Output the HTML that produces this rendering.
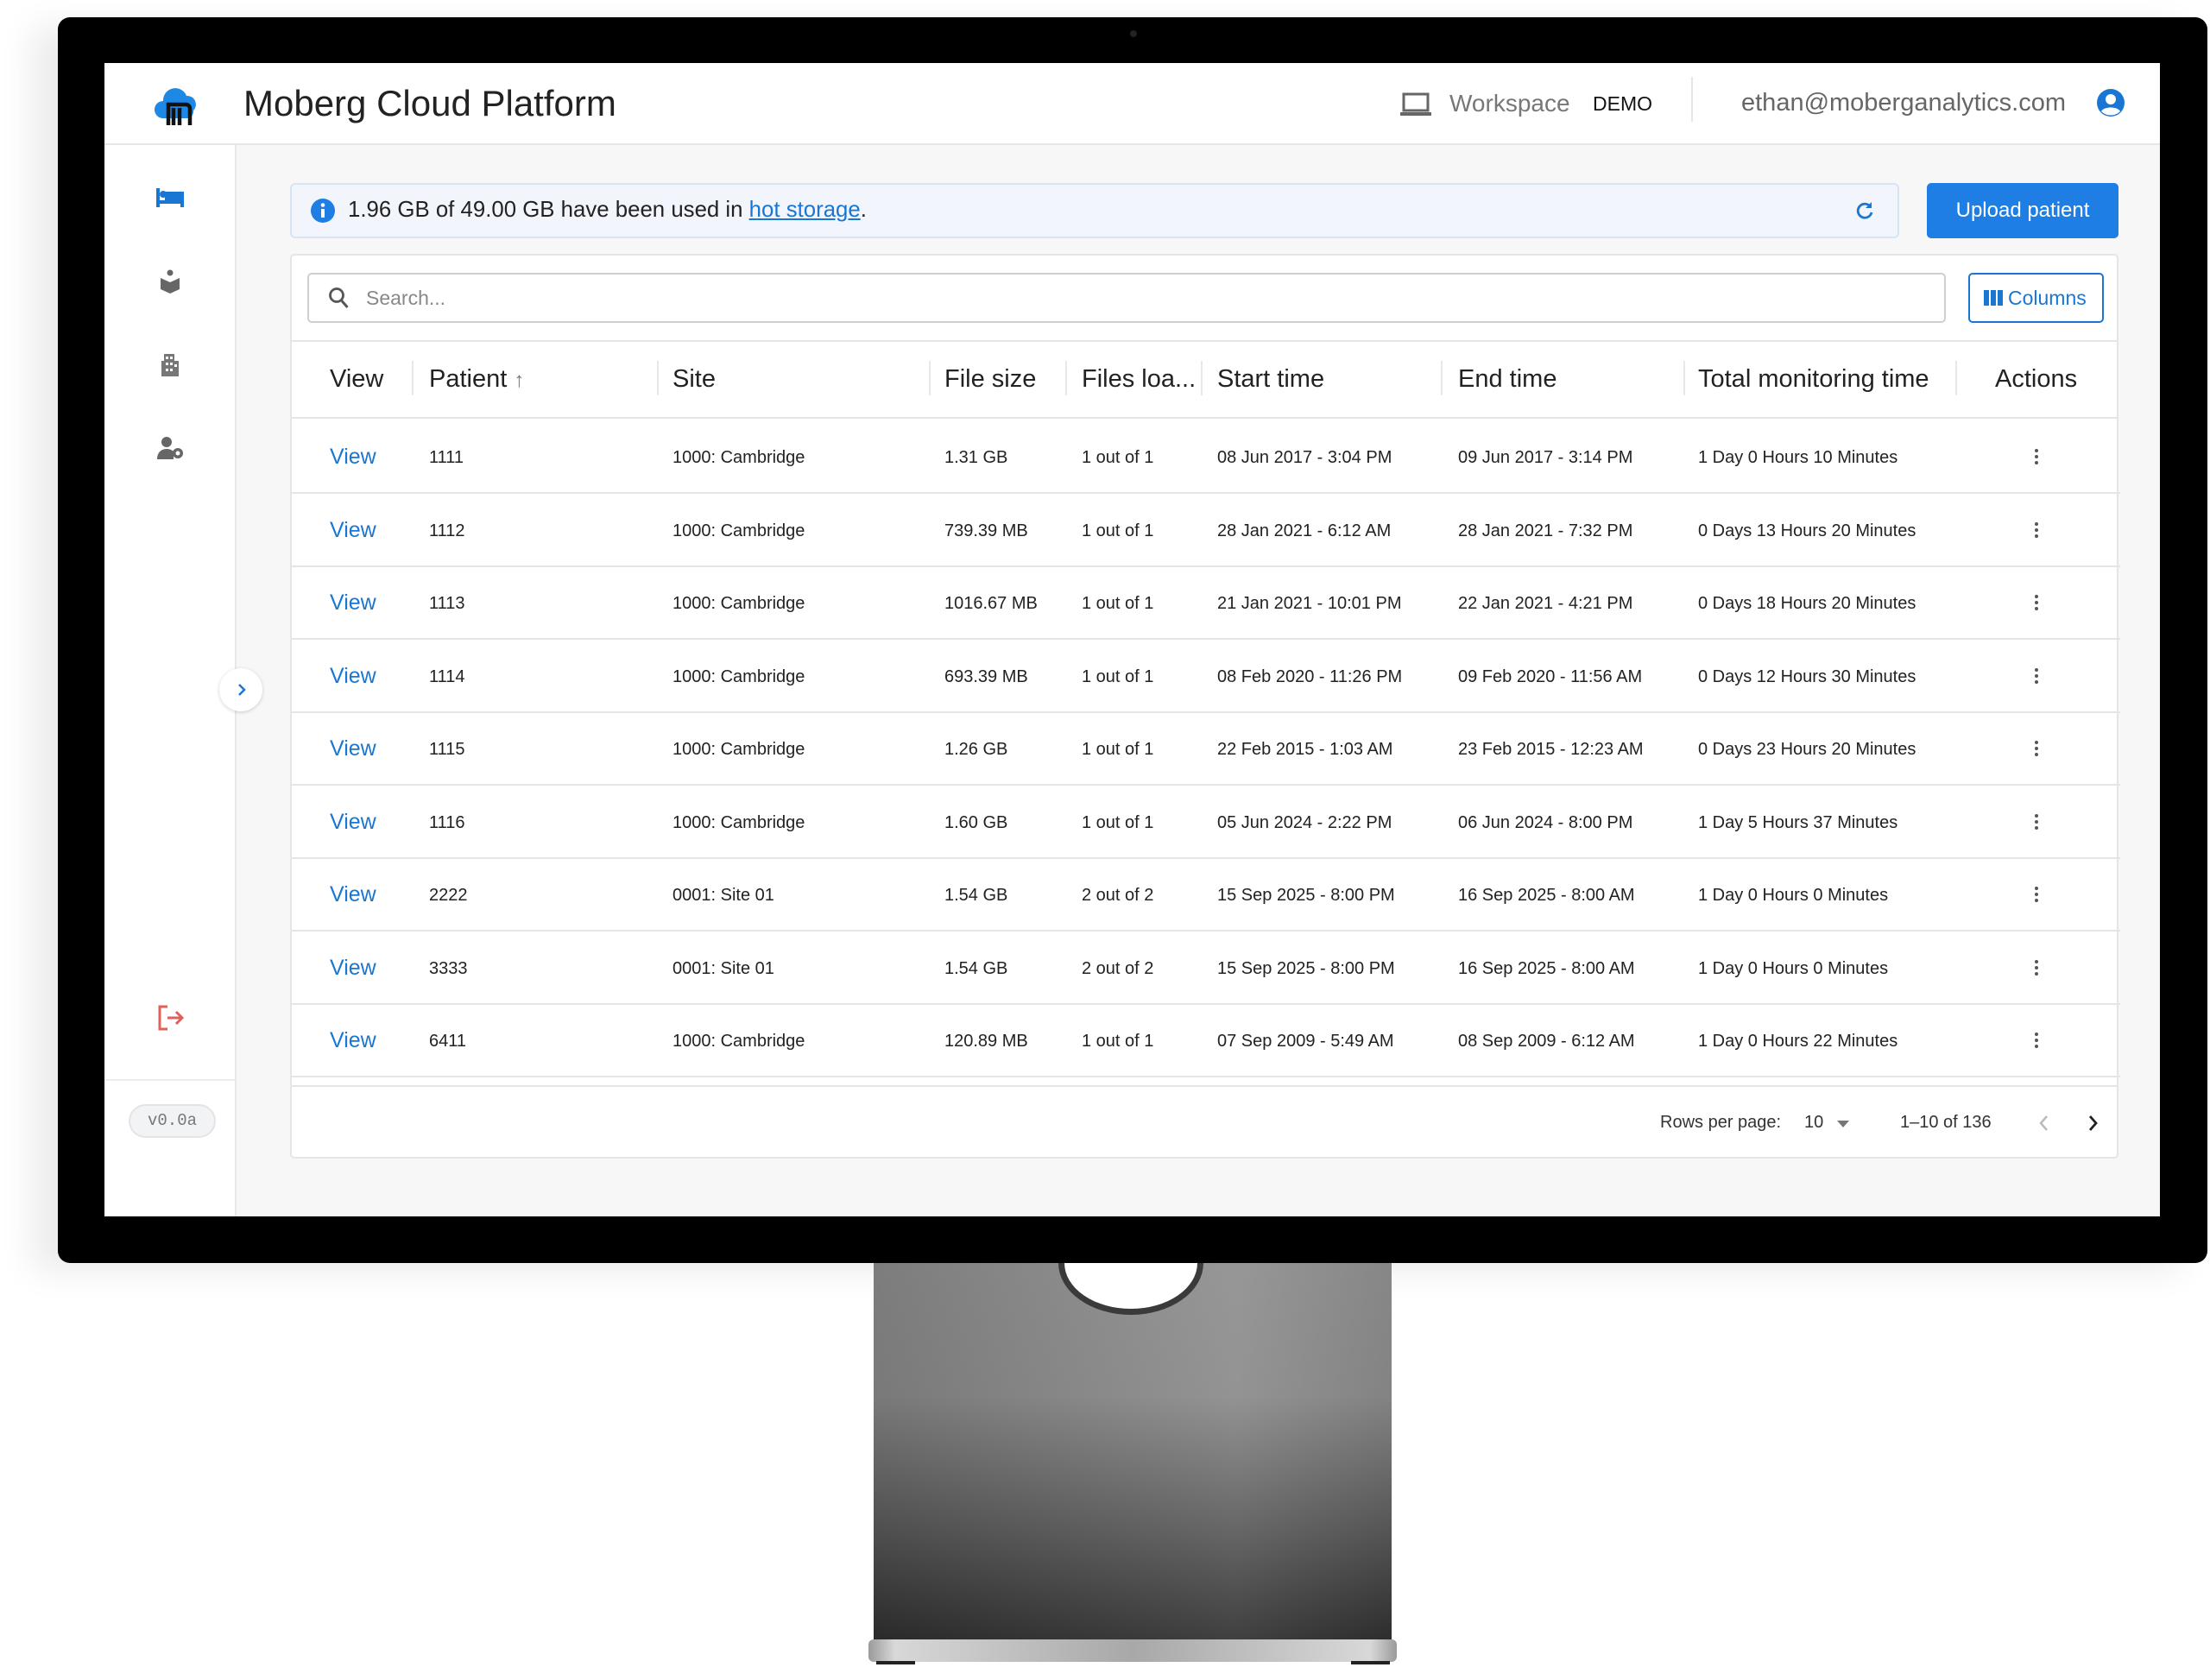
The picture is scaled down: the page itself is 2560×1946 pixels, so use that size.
<!DOCTYPE html>
<html><head><meta charset="utf-8"><style>
*{margin:0;padding:0;box-sizing:border-box}
body{width:2560px;height:1946px;background:#fff;position:relative;overflow:hidden;font-family:"Liberation Sans",sans-serif;color:#222}
.a{position:absolute}
.bezel{left:67px;top:20px;width:2490px;height:1443px;background:#000;border-radius:14px;box-shadow:-30px 10px 40px rgba(0,0,0,.08)}
.screen{left:121px;top:73px;width:2381px;height:1336px;background:#f7f7f7;overflow:hidden}
.hdr{left:0;top:0;width:2381px;height:95px;background:#fff;border-bottom:2px solid #e6e6e6}
.side{left:0;top:95px;width:153px;height:1241px;background:#fff;border-right:2px solid #e8e8e8}
.t{position:absolute;white-space:nowrap}
.hc{font-size:29px;color:#222;top:42px;line-height:30px}
.rc{font-size:20px;color:#222;line-height:24px}
.vw{font-size:25px;color:#1976d2;line-height:28px}
.sep{position:absolute;top:22px;width:2px;height:40px;background:#e8e8e8}
.row{position:absolute;left:0;width:2118px;height:85px;border-bottom:2px solid #e5e5e5}
.kb{position:absolute;left:2019px;width:4px;height:4px;border-radius:2px;background:#555}
</style></head><body>
<div class="a bezel"></div>
<div class="a" style="left:1309px;top:35px;width:8px;height:8px;border-radius:4px;background:#222"></div>
<!-- stand -->
<div class="a" style="left:1012px;top:1463px;width:600px;height:440px;background:linear-gradient(180deg,#8e8e8e 0%,#8a8a8a 35%,#5a5a5a 70%,#2e2e2e 100%)"></div>
<div class="a" style="left:1012px;top:1463px;width:600px;height:440px;background:linear-gradient(90deg,rgba(0,0,0,.12),rgba(255,255,255,.08) 70%,rgba(0,0,0,.05))"></div>
<div class="a" style="left:1226px;top:1463px;width:168px;height:60px;border-radius:0 0 84px 84px/0 0 60px 60px;background:#fff;border:7px solid #3a3a3a;border-top:none"></div>
<div class="a" style="left:1006px;top:1899px;width:612px;height:26px;border-radius:6px;background:linear-gradient(90deg,#9a9a9a,#d8d8d8 5%,#a8a8a8 50%,#d8d8d8 95%,#9a9a9a)"></div>
<div class="a" style="left:1015px;top:1924px;width:45px;height:4px;background:#222"></div>
<div class="a" style="left:1565px;top:1924px;width:45px;height:4px;background:#222"></div>

<div class="a screen">
 <div class="a hdr">
  <svg class="a" style="left:58px;top:24px" width="54" height="48" viewBox="0 0 54 48"><path d="M10 40a10 10 0 0 1 0-20 14 14 0 0 1 27-6 10 10 0 0 1 8 17 9 9 0 0 1-5 9z" fill="#1e88e5"/><path d="M16 48V24h20c3 0 5 2 5 5v19M22 48V28M29 48V28" stroke="#111" stroke-width="4.5" fill="none"/></svg>
  <div class="t" style="left:161px;top:23px;font-size:42px;color:#222">Moberg Cloud Platform</div>
  <svg class="a" style="left:1500px;top:33px" width="38" height="30" viewBox="0 0 38 30"><rect x="5" y="3" width="28" height="19" fill="none" stroke="#666" stroke-width="3"/><rect x="1" y="24" width="36" height="4" fill="#666"/></svg>
  <div class="t" style="left:1558px;top:31px;font-size:28px;color:#777">Workspace</div>
  <div class="t" style="left:1724px;top:34px;font-size:23px;color:#111">DEMO</div>
  <div class="a" style="left:1838px;top:16px;width:2px;height:52px;background:#e6e6e6"></div>
  <div class="t" style="left:1896px;top:30px;font-size:29px;color:#666">ethan@moberganalytics.com</div>
  <svg class="a" style="left:2307px;top:29px" width="34" height="34" viewBox="0 0 34 34"><circle cx="17" cy="17" r="16" fill="#1976d2"/><circle cx="17" cy="13" r="6" fill="#fff"/><path d="M6 27c3-6 19-6 22 0-6 6-16 6-22 0z" fill="#fff"/></svg>
 </div>
 <div class="a side">
  <svg class="a" style="left:60px;top:48px" width="32" height="26" viewBox="0 0 32 26"><path d="M2 2v22M2 18h28v6M10 8h20v10" stroke="#1976d2" stroke-width="4" fill="none"/><circle cx="8" cy="9" r="4" fill="#1976d2"/><rect x="10" y="8" width="20" height="10" fill="#1976d2"/></svg>
  <svg class="a" style="left:63px;top:144px" width="26" height="28" viewBox="0 0 26 28"><circle cx="13" cy="4" r="3.5" fill="#666"/><path d="M2 10l11 5 11-5v13l-11 5-11-5z" fill="#666"/></svg>
  <svg class="a" style="left:64px;top:240px" width="24" height="28" viewBox="0 0 24 28"><path d="M5 2h12v8h5v18H2V10h3z" fill="#777"/><g fill="#fff"><rect x="7" y="5" width="3" height="3"/><rect x="12" y="5" width="3" height="3"/><rect x="7" y="12" width="3" height="3"/><rect x="12" y="12" width="3" height="3"/><rect x="7" y="19" width="3" height="3"/><rect x="12" y="19" width="3" height="3"/><rect x="17" y="14" width="3" height="3"/></g></svg>
  <svg class="a" style="left:61px;top:337px" width="32" height="28" viewBox="0 0 32 28"><circle cx="11" cy="7" r="6" fill="#666"/><path d="M0 27c0-9 6-12 11-12 3 0 6 1 8 3v9z" fill="#666"/><circle cx="24" cy="20" r="6" fill="#666"/><circle cx="24" cy="20" r="2.5" fill="#fff"/></svg>
  <svg class="a" style="left:61px;top:996px" width="32" height="30" viewBox="0 0 32 30"><path d="M12 2H3v26h9M12 15h17M22 8l7 7-7 7" stroke="#e0605a" stroke-width="3" fill="none"/></svg>
  <div class="a" style="left:0;top:1082px;width:151px;height:2px;background:#ececec"></div>
  <div class="t" style="left:28px;top:1111px;width:101px;height:39px;border-radius:20px;background:#f2f3f5;border:2px solid #e4e4e8;font-family:'Liberation Mono',monospace;font-size:19px;color:#777;text-align:center;line-height:35px">v0.0a</div>
 </div>
 <div class="a" style="left:133px;top:701px;width:50px;height:50px;border-radius:25px;background:#fff;box-shadow:0 1px 4px rgba(0,0,0,.18)"></div>
 <svg class="a" style="left:149px;top:716px" width="20" height="20" viewBox="0 0 20 20"><path d="M7 4l6 6-6 6" stroke="#1976d2" stroke-width="2.5" fill="none"/></svg>

 <!-- info banner -->
 <div class="a" style="left:215px;top:139px;width:1864px;height:64px;background:#f2f6fc;border:2px solid #d6e4f4;border-radius:6px"></div>
 <svg class="a" style="left:239px;top:157px" width="28" height="28" viewBox="0 0 28 28"><circle cx="14" cy="14" r="14" fill="#1e7ee4"/><rect x="12" y="12" width="4" height="10" fill="#fff"/><circle cx="14" cy="7.5" r="2.3" fill="#fff"/></svg>
 <div class="t" style="left:282px;top:156px;font-size:25.8px;color:#222">1.96 GB of 49.00 GB have been used in <span style="color:#1976d2;text-decoration:underline">hot storage</span>.</div>
 <svg class="a" style="left:2027px;top:159px" width="24" height="24" viewBox="0 0 24 24"><path d="M19 8a8 8 0 1 0 1 6" stroke="#1976d2" stroke-width="2.8" fill="none"/><path d="M20 2v7h-7z" fill="#1976d2"/></svg>
 <div class="t" style="left:2111px;top:139px;width:222px;height:64px;background:#1e7ee4;border-radius:5px;color:#fff;font-size:24px;text-align:center;line-height:64px">Upload patient</div>

 <!-- card -->
 <div class="a" style="left:215px;top:221px;width:2118px;height:1048px;background:#fff;border:2px solid #e5e5e5;border-radius:5px">
  <div class="a" style="left:18px;top:20px;width:1898px;height:58px;border:2px solid #cfcfcf;border-radius:5px"></div>
  <svg class="a" style="left:42px;top:36px" width="26" height="28" viewBox="0 0 26 28"><circle cx="10" cy="10" r="7.5" stroke="#555" stroke-width="2.8" fill="none"/><path d="M15.5 16l7 8" stroke="#555" stroke-width="3"/></svg>
  <div class="t" style="left:86px;top:36px;font-size:23px;color:#888">Search...</div>
  <div class="a" style="left:1942px;top:20px;width:157px;height:58px;border:2px solid #1976d2;border-radius:5px"></div>
  <svg class="a" style="left:1960px;top:40px" width="22" height="18" viewBox="0 0 22 18"><rect x="0" y="0" width="6" height="18" fill="#1976d2"/><rect x="8" y="0" width="6" height="18" fill="#1976d2"/><rect x="16" y="0" width="6" height="18" fill="#1976d2"/></svg>
  <div class="t" style="left:1988px;top:36px;font-size:23px;color:#1976d2">Columns</div>
  <div class="a" style="left:0;top:98px;width:2114px;height:2px;background:#e5e5e5"></div>
  <!-- header -->
  <div class="a" style="left:0;top:100px;width:2114px;height:89px;border-bottom:2px solid #e5e5e5">
   <div class="t hc" style="left:44px;top:28px">View</div>
   <div class="sep" style="left:139px"></div>
   <div class="t hc" style="left:159px;top:28px">Patient <span style="color:#777;font-size:24px">↑</span></div>
   <div class="sep" style="left:423px"></div>
   <div class="t hc" style="left:441px;top:28px">Site</div>
   <div class="sep" style="left:738px"></div>
   <div class="t hc" style="left:756px;top:28px">File size</div>
   <div class="sep" style="left:896px"></div>
   <div class="t hc" style="left:915px;top:28px">Files loa...</div>
   <div class="sep" style="left:1053px"></div>
   <div class="t hc" style="left:1072px;top:28px">Start time</div>
   <div class="sep" style="left:1331px"></div>
   <div class="t hc" style="left:1351px;top:28px">End time</div>
   <div class="sep" style="left:1612px"></div>
   <div class="t hc" style="left:1629px;top:28px">Total monitoring time</div>
   <div class="sep" style="left:1927px"></div>
   <div class="t hc" style="left:1973px;top:28px">Actions</div>
  </div>
  <!-- rows -->
  <div class="row" style="top:191px"><div class="t vw" style="left:44px;top:28px">View</div><div class="t rc" style="left:159px;top:31px">1111</div><div class="t rc" style="left:441px;top:31px">1000: Cambridge</div><div class="t rc" style="left:756px;top:31px">1.31 GB</div><div class="t rc" style="left:915px;top:31px">1 out of 1</div><div class="t rc" style="left:1072px;top:31px">08 Jun 2017 - 3:04 PM</div><div class="t rc" style="left:1351px;top:31px">09 Jun 2017 - 3:14 PM</div><div class="t rc" style="left:1629px;top:31px">1 Day 0 Hours 10 Minutes</div><div class="kb" style="top:33px"></div><div class="kb" style="top:40px"></div><div class="kb" style="top:47px"></div></div>
  <div class="row" style="top:276px"><div class="t vw" style="left:44px;top:28px">View</div><div class="t rc" style="left:159px;top:31px">1112</div><div class="t rc" style="left:441px;top:31px">1000: Cambridge</div><div class="t rc" style="left:756px;top:31px">739.39 MB</div><div class="t rc" style="left:915px;top:31px">1 out of 1</div><div class="t rc" style="left:1072px;top:31px">28 Jan 2021 - 6:12 AM</div><div class="t rc" style="left:1351px;top:31px">28 Jan 2021 - 7:32 PM</div><div class="t rc" style="left:1629px;top:31px">0 Days 13 Hours 20 Minutes</div><div class="kb" style="top:33px"></div><div class="kb" style="top:40px"></div><div class="kb" style="top:47px"></div></div>
  <div class="row" style="top:360px"><div class="t vw" style="left:44px;top:28px">View</div><div class="t rc" style="left:159px;top:31px">1113</div><div class="t rc" style="left:441px;top:31px">1000: Cambridge</div><div class="t rc" style="left:756px;top:31px">1016.67 MB</div><div class="t rc" style="left:915px;top:31px">1 out of 1</div><div class="t rc" style="left:1072px;top:31px">21 Jan 2021 - 10:01 PM</div><div class="t rc" style="left:1351px;top:31px">22 Jan 2021 - 4:21 PM</div><div class="t rc" style="left:1629px;top:31px">0 Days 18 Hours 20 Minutes</div><div class="kb" style="top:33px"></div><div class="kb" style="top:40px"></div><div class="kb" style="top:47px"></div></div>
  <div class="row" style="top:445px"><div class="t vw" style="left:44px;top:28px">View</div><div class="t rc" style="left:159px;top:31px">1114</div><div class="t rc" style="left:441px;top:31px">1000: Cambridge</div><div class="t rc" style="left:756px;top:31px">693.39 MB</div><div class="t rc" style="left:915px;top:31px">1 out of 1</div><div class="t rc" style="left:1072px;top:31px">08 Feb 2020 - 11:26 PM</div><div class="t rc" style="left:1351px;top:31px">09 Feb 2020 - 11:56 AM</div><div class="t rc" style="left:1629px;top:31px">0 Days 12 Hours 30 Minutes</div><div class="kb" style="top:33px"></div><div class="kb" style="top:40px"></div><div class="kb" style="top:47px"></div></div>
  <div class="row" style="top:529px"><div class="t vw" style="left:44px;top:28px">View</div><div class="t rc" style="left:159px;top:31px">1115</div><div class="t rc" style="left:441px;top:31px">1000: Cambridge</div><div class="t rc" style="left:756px;top:31px">1.26 GB</div><div class="t rc" style="left:915px;top:31px">1 out of 1</div><div class="t rc" style="left:1072px;top:31px">22 Feb 2015 - 1:03 AM</div><div class="t rc" style="left:1351px;top:31px">23 Feb 2015 - 12:23 AM</div><div class="t rc" style="left:1629px;top:31px">0 Days 23 Hours 20 Minutes</div><div class="kb" style="top:33px"></div><div class="kb" style="top:40px"></div><div class="kb" style="top:47px"></div></div>
  <div class="row" style="top:614px"><div class="t vw" style="left:44px;top:28px">View</div><div class="t rc" style="left:159px;top:31px">1116</div><div class="t rc" style="left:441px;top:31px">1000: Cambridge</div><div class="t rc" style="left:756px;top:31px">1.60 GB</div><div class="t rc" style="left:915px;top:31px">1 out of 1</div><div class="t rc" style="left:1072px;top:31px">05 Jun 2024 - 2:22 PM</div><div class="t rc" style="left:1351px;top:31px">06 Jun 2024 - 8:00 PM</div><div class="t rc" style="left:1629px;top:31px">1 Day 5 Hours 37 Minutes</div><div class="kb" style="top:33px"></div><div class="kb" style="top:40px"></div><div class="kb" style="top:47px"></div></div>
  <div class="row" style="top:698px"><div class="t vw" style="left:44px;top:28px">View</div><div class="t rc" style="left:159px;top:31px">2222</div><div class="t rc" style="left:441px;top:31px">0001: Site 01</div><div class="t rc" style="left:756px;top:31px">1.54 GB</div><div class="t rc" style="left:915px;top:31px">2 out of 2</div><div class="t rc" style="left:1072px;top:31px">15 Sep 2025 - 8:00 PM</div><div class="t rc" style="left:1351px;top:31px">16 Sep 2025 - 8:00 AM</div><div class="t rc" style="left:1629px;top:31px">1 Day 0 Hours 0 Minutes</div><div class="kb" style="top:33px"></div><div class="kb" style="top:40px"></div><div class="kb" style="top:47px"></div></div>
  <div class="row" style="top:783px"><div class="t vw" style="left:44px;top:28px">View</div><div class="t rc" style="left:159px;top:31px">3333</div><div class="t rc" style="left:441px;top:31px">0001: Site 01</div><div class="t rc" style="left:756px;top:31px">1.54 GB</div><div class="t rc" style="left:915px;top:31px">2 out of 2</div><div class="t rc" style="left:1072px;top:31px">15 Sep 2025 - 8:00 PM</div><div class="t rc" style="left:1351px;top:31px">16 Sep 2025 - 8:00 AM</div><div class="t rc" style="left:1629px;top:31px">1 Day 0 Hours 0 Minutes</div><div class="kb" style="top:33px"></div><div class="kb" style="top:40px"></div><div class="kb" style="top:47px"></div></div>
  <div class="row" style="top:867px"><div class="t vw" style="left:44px;top:28px">View</div><div class="t rc" style="left:159px;top:31px">6411</div><div class="t rc" style="left:441px;top:31px">1000: Cambridge</div><div class="t rc" style="left:756px;top:31px">120.89 MB</div><div class="t rc" style="left:915px;top:31px">1 out of 1</div><div class="t rc" style="left:1072px;top:31px">07 Sep 2009 - 5:49 AM</div><div class="t rc" style="left:1351px;top:31px">08 Sep 2009 - 6:12 AM</div><div class="t rc" style="left:1629px;top:31px">1 Day 0 Hours 22 Minutes</div><div class="kb" style="top:33px"></div><div class="kb" style="top:40px"></div><div class="kb" style="top:47px"></div></div>
  <div class="a" style="left:0;top:961px;width:2114px;height:2px;background:#e5e5e5"></div>
  <!-- footer -->
  <div class="t" style="left:1585px;top:993px;font-size:20px;color:#333">Rows per page:</div>
  <div class="t" style="left:1752px;top:993px;font-size:20px;color:#333">10</div>
  <svg class="a" style="left:1790px;top:1002px" width="14" height="8" viewBox="0 0 14 8"><path d="M0 0h14L7 8z" fill="#777"/></svg>
  <div class="t" style="left:1863px;top:993px;font-size:20px;color:#333">1–10 of 136</div>
  <svg class="a" style="left:2022px;top:994px" width="14" height="22" viewBox="0 0 14 22"><path d="M11 3L4 11l7 8" stroke="#bbb" stroke-width="2.5" fill="none"/></svg>
  <svg class="a" style="left:2080px;top:994px" width="14" height="22" viewBox="0 0 14 22"><path d="M3 3l7 8-7 8" stroke="#222" stroke-width="2.8" fill="none"/></svg>
 </div>
</div>
</body></html>
